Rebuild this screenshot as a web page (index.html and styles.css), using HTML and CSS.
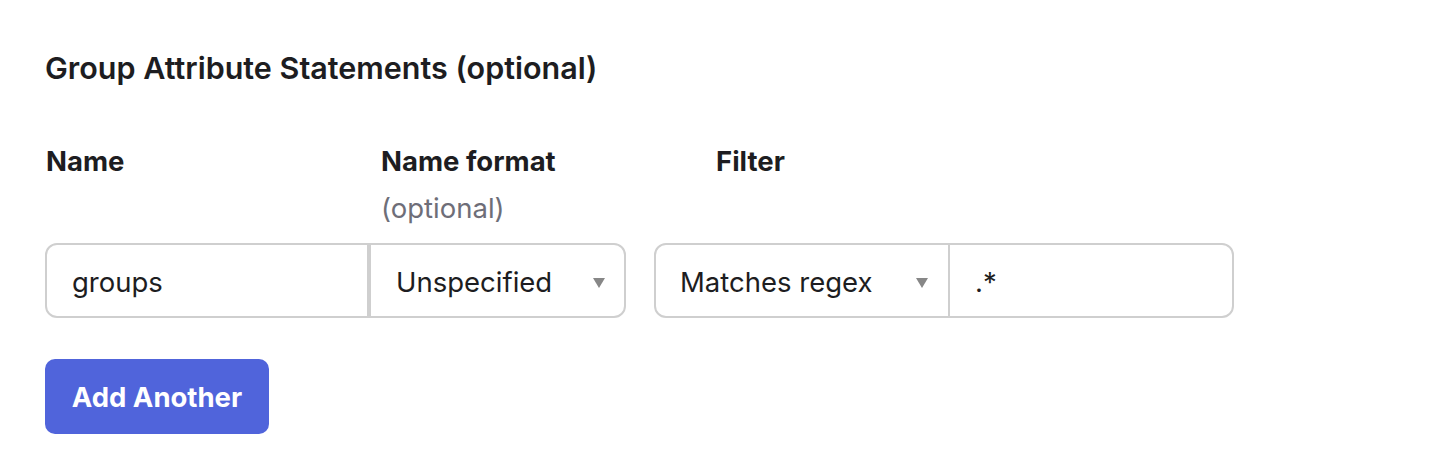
FILE: index.html
```html
<!DOCTYPE html>
<html>
<head>
<meta charset="utf-8">
<link rel="stylesheet" href="styles.css">
</head>
<body>
<section class="panel">
  <h2 class="title">Group Attribute Statements (optional)</h2>
  <div class="labels">
    <div class="label">Name</div>
    <div class="label">Name format<span class="opt">(optional)</span></div>
    <div class="label">Filter</div>
  </div>
  <div class="row">
    <div class="group g1">
      <div class="field name">groups</div>
      <div class="field select fmt">Unspecified<span class="caret"></span></div>
    </div>
    <div class="group g2">
      <div class="field select flt">Matches regex<span class="caret"></span></div>
      <div class="field val">.*</div>
    </div>
  </div>
  <button class="btn">Add Another</button>
</section>
</body>
</html>
```
FILE: styles.css
```css
html, body { margin: 0; padding: 0; background: #fff; }
body { font-family: Inter, "Noto Sans", sans-serif; color: #1d1d21; }
.panel { padding: 46px 0 0 45px; }
.title { margin: 0; font-size: 30.5px; font-weight: 600; line-height: 44px; }
.labels { display: grid; grid-template-columns: 335px 335px 335px; margin-top: 57px; padding-left: 1px; }
.label { font-size: 27.5px; font-weight: 700; line-height: 28px; display: flex; flex-direction: column; gap: 19px; }
.opt { font-weight: 400; color: #6e6e78; font-size: 27.5px; }
.row { display: flex; gap: 28px; margin-top: 21px; }
.group { display: flex; border: 2px solid #cfcfcf; border-radius: 12px; height: 71px; }
.field { display: flex; align-items: center; font-size: 27.5px; padding: 2px 0 0 25px; box-sizing: border-box; }
.name { width: 324px; border-right: 4px solid #cfcfcf; }
.fmt { width: 253px; }
.flt { width: 294px; border-right: 2px solid #cfcfcf; padding-left: 24px; }
.val { width: 282px; }
.select { position: relative; }
.caret { position: absolute; right: 19px; top: 33px; width: 0; height: 0; border-left: 6px solid transparent; border-right: 6px solid transparent; border-top: 10px solid #878787; }
.flt .caret { right: 20px; }
.btn { display: block; margin-top: 41px; background: #5064db; color: #fff; border: 0; border-radius: 10px; width: 224px; height: 75px; font-family: Inter, sans-serif; font-weight: 700; font-size: 27.5px; padding: 0; }
```
